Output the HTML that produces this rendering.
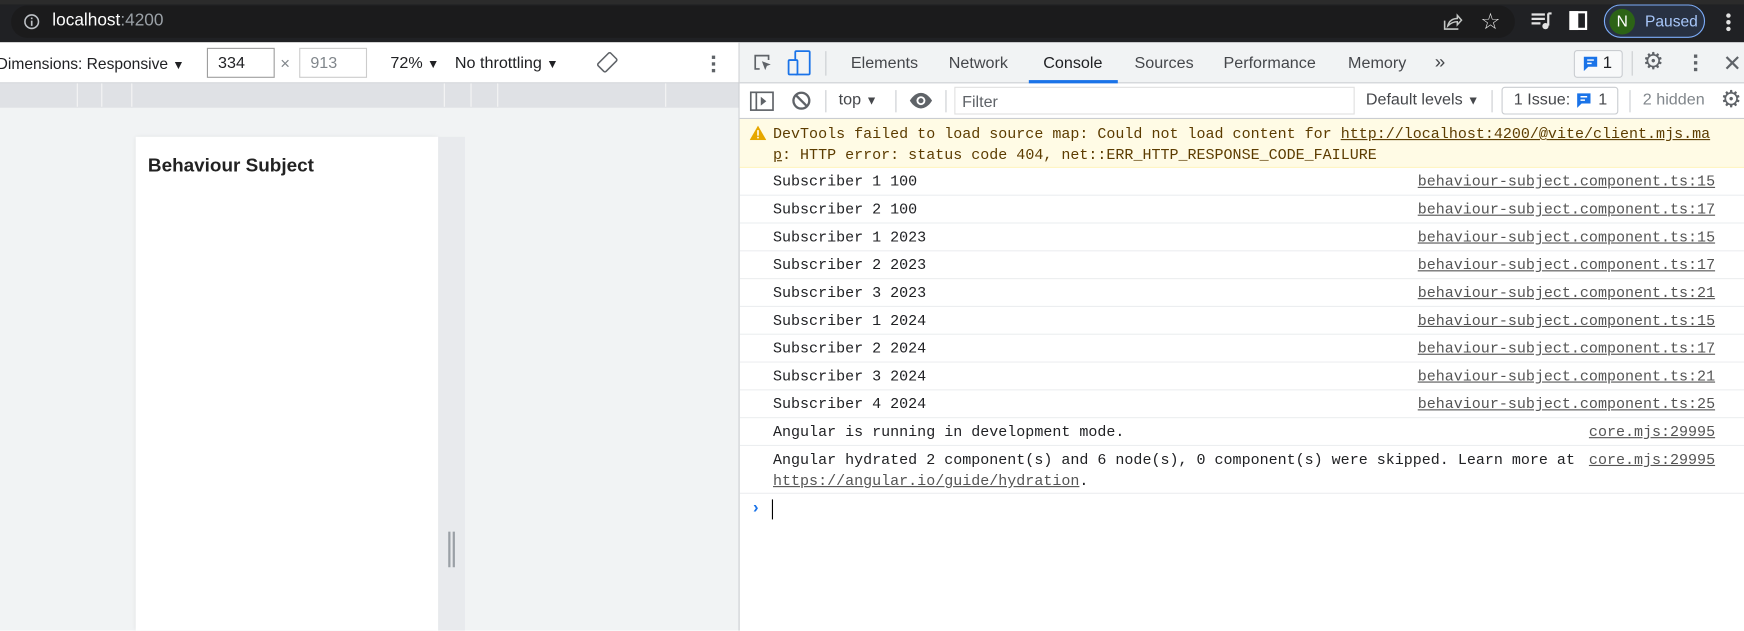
<!DOCTYPE html>
<html><head><meta charset="utf-8"><style>
*{box-sizing:border-box;margin:0;padding:0}
html,body{width:1744px;height:631px;overflow:hidden;background:#fff}
#w{position:absolute;left:0;top:0;width:1568px;height:567px;transform:scale(1.112245);transform-origin:0 0;font-family:"Liberation Sans",sans-serif;font-size:14px;color:#202124}
.a{position:absolute}
.mono{font-family:"Liberation Mono",monospace;font-size:13.5px}
.row{position:absolute;left:665px;right:0;height:25px;border-bottom:1px solid #eceef0}
.row .t{position:absolute;left:30px;top:6px;color:#202124;white-space:pre}
.row .l{position:absolute;right:26px;top:6px;color:#545454;text-decoration:underline}
.tab{position:absolute;top:49px;font-size:14.5px;color:#45474b}
</style></head><body><div id="w">
<!-- top bar -->
<div class="a" style="left:0;top:0;width:1568px;height:38px;background:#2b2b2b"></div>
<div class="a" style="left:0;top:4px;width:1568px;height:34px;background:#202124"></div>
<div class="a" style="left:10px;top:5px;width:1352px;height:29px;border-radius:15px;background:#1b1b1c"></div>
<svg class="a" style="left:21px;top:12px" width="15" height="15" viewBox="0 0 16 16"><circle cx="8" cy="8" r="6.5" fill="none" stroke="#bdc1c6" stroke-width="1.5"/><rect x="7.2" y="7" width="1.6" height="5" fill="#bdc1c6"/><rect x="7.2" y="4" width="1.6" height="1.6" fill="#bdc1c6"/></svg>
<div class="a" style="left:47px;top:10px;font-size:15.5px;color:#fff">localhost<span style="color:#9aa0a6">:4200</span></div>
<svg class="a" style="left:1296px;top:10px" width="19" height="19" viewBox="0 0 20 20"><path d="M3 9v8h13" fill="none" stroke="#c4c7c5" stroke-width="1.5"/><path d="M6 14c1-5 5-7 9-7V4l4 4.5-4 4.5V10c-3 0-6 1-9 4z" fill="none" stroke="#c4c7c5" stroke-width="1.4"/></svg>
<div class="a" style="left:1331px;top:7px;font-size:20px;color:#e3e3e3">☆</div>
<svg class="a" style="left:1376px;top:11px" width="20" height="16" viewBox="0 0 20 16"><path d="M1 2h12M1 6h12M1 10h8" stroke="#e3e3e3" stroke-width="2"/><path d="M16 1v11" stroke="#e3e3e3" stroke-width="2"/><path d="M16 1h3" stroke="#e3e3e3" stroke-width="2"/><circle cx="13.5" cy="12.5" r="2.8" fill="#e3e3e3"/></svg>
<div class="a" style="left:1411px;top:10px;width:16px;height:17px;border:2px solid #fff;border-left-width:3px;background:#202124"></div>
<div class="a" style="left:1411px;top:10px;width:8px;height:17px;background:#fff"></div>
<div class="a" style="left:1442px;top:4px;width:91px;height:30px;border:1.5px solid #7cacf8;border-radius:15px;background:#283142"></div>
<div class="a" style="left:1447px;top:8px;width:23px;height:23px;border-radius:50%;background:#2c6316;color:#fff;font-size:14px;text-align:center;line-height:23px">N</div>
<div class="a" style="left:1479px;top:11px;font-size:14px;color:#a8c7fa">Paused</div>
<div class="a" style="left:1552px;top:12px;width:4px;height:4px;border-radius:2px;background:#e3e3e3;box-shadow:0 6px 0 #e3e3e3,0 12px 0 #e3e3e3"></div>

<!-- left device pane -->
<div class="a" style="left:0;top:38px;width:665px;height:37px;background:#fff;border-bottom:1px solid #d0d3d7"></div>
<div class="a" style="left:-3px;top:49px;font-size:14px;color:#202124">Dimensions: Responsive <span style="font-size:11px">▼</span></div>
<div class="a" style="left:186px;top:43px;width:61px;height:27px;border:1px solid #9e9e9e;background:#fff;padding:5px 0 0 9px;font-size:14.5px">334</div>
<div class="a" style="left:252px;top:49px;font-size:15px;color:#80868b">×</div>
<div class="a" style="left:269px;top:43px;width:61px;height:27px;border:1px solid #ccc;background:#fff;padding:5px 0 0 9px;font-size:14.5px;color:#80868b">913</div>
<div class="a" style="left:351px;top:49px;font-size:14.5px">72% <span style="font-size:11px">▼</span></div>
<div class="a" style="left:409px;top:49px;font-size:14.5px">No throttling <span style="font-size:11px">▼</span></div>
<svg class="a" style="left:536px;top:46px" width="20" height="20" viewBox="0 0 20 20"><rect x="5" y="2" width="10" height="16" rx="1.5" transform="rotate(45 10 10)" fill="none" stroke="#5f6368" stroke-width="1.4"/></svg>
<div class="a" style="left:640px;top:50px;width:3px;height:3px;background:#5f6368;box-shadow:0 6px 0 #5f6368,0 12px 0 #5f6368"></div>
<div class="a" style="left:0;top:75px;width:665px;height:22px;background:#dfe1e5"></div>
<div class="a" style="left:69px;top:75px;width:1px;height:21px;background:#f5f5f5"></div>
<div class="a" style="left:91px;top:75px;width:1px;height:21px;background:#f5f5f5"></div>
<div class="a" style="left:118px;top:75px;width:1px;height:21px;background:#f5f5f5"></div>
<div class="a" style="left:399px;top:75px;width:1px;height:21px;background:#f5f5f5"></div>
<div class="a" style="left:423px;top:75px;width:1px;height:21px;background:#f5f5f5"></div>
<div class="a" style="left:447px;top:75px;width:1px;height:21px;background:#f5f5f5"></div>
<div class="a" style="left:598px;top:75px;width:1px;height:21px;background:#f5f5f5"></div>
<div class="a" style="left:0;top:97px;width:665px;height:470px;background:#f1f3f4"></div>
<div class="a" style="left:122px;top:123px;width:272px;height:444px;background:#fff;box-shadow:0 0 4px rgba(0,0,0,.08)"></div>
<div class="a" style="left:394px;top:123px;width:24px;height:444px;background:#e8eaed"></div>
<div class="a" style="left:403px;top:478px;width:2px;height:32px;background:#9aa0a6"></div>
<div class="a" style="left:407px;top:478px;width:2px;height:32px;background:#9aa0a6"></div>
<div class="a" style="left:133px;top:139px;font-size:17px;font-weight:bold;color:#222">Behaviour Subject</div>

<!-- devtools -->
<div class="a" style="left:664px;top:38px;width:1px;height:529px;background:#cacdd1"></div>
<div class="a" style="left:665px;top:38px;width:903px;height:37px;background:#f1f3f4;border-bottom:1px solid #cacdd1"></div>
<svg class="a" style="left:676px;top:47px" width="20" height="20" viewBox="0 0 20 20"><path d="M7 15H3V3h12v4" fill="none" stroke="#5f6368" stroke-width="1.5"/><path d="M9 8l8 3-3.5 1.2L12 16z" fill="#5f6368"/></svg>
<svg class="a" style="left:708px;top:45px" width="22" height="24" viewBox="0 0 22 24"><rect x="7" y="1" width="13" height="21" rx="1" fill="none" stroke="#1a73e8" stroke-width="1.6"/><rect x="1" y="9" width="8" height="13" rx="1" fill="#f1f3f4" stroke="#1a73e8" stroke-width="1.6"/></svg>
<div class="a" style="left:742px;top:46px;width:1px;height:22px;background:#cacdd1"></div>
<div class="tab" style="left:765px">Elements</div>
<div class="tab" style="left:853px">Network</div>
<div class="tab" style="left:938px;color:#202124">Console</div>
<div class="a" style="left:925px;top:72px;width:80px;height:3px;background:#1a73e8"></div>
<div class="tab" style="left:1020px">Sources</div>
<div class="tab" style="left:1100px">Performance</div>
<div class="tab" style="left:1212px">Memory</div>
<div class="tab" style="left:1290px;font-size:17px;top:46px">»</div>
<div class="a" style="left:1415px;top:45px;width:44px;height:25px;border:1px solid #cacdd1;border-radius:3px;background:#f8f9fa"></div>
<svg class="a" style="left:1423px;top:50px" width="14" height="15" viewBox="0 0 14 15"><path d="M1 1h12v9H5l-4 4z" fill="#1a73e8"/><path d="M4 4h6M4 7h4" stroke="#fff" stroke-width="1.3"/></svg>
<div class="a" style="left:1441px;top:48px;font-size:15px">1</div>
<div class="a" style="left:1467px;top:46px;width:1px;height:22px;background:#cacdd1"></div>
<div class="a" style="left:1477px;top:43px;font-size:21px;color:#5f6368">⚙</div>
<div class="a" style="left:1523px;top:49px;width:3px;height:3px;background:#5f6368;box-shadow:0 6px 0 #5f6368,0 12px 0 #5f6368"></div>
<div class="a" style="left:1549px;top:45px;font-size:20px;color:#5f6368">✕</div>

<div class="a" style="left:665px;top:75px;width:903px;height:32px;background:#fff;border-bottom:1px solid #cacdd1"></div>
<svg class="a" style="left:674px;top:81px" width="22" height="20" viewBox="0 0 22 20"><rect x="1" y="2" width="20" height="16" fill="none" stroke="#5f6368" stroke-width="1.5"/><path d="M6 2v16" stroke="#5f6368" stroke-width="1.5"/><path d="M10 6l5 4-5 4z" fill="#5f6368"/></svg>
<svg class="a" style="left:711px;top:81px" width="19" height="19" viewBox="0 0 20 20"><circle cx="10" cy="10" r="7.5" fill="none" stroke="#5f6368" stroke-width="2.2"/><path d="M5 5l10 10" stroke="#5f6368" stroke-width="2.2"/></svg>
<div class="a" style="left:742px;top:81px;width:1px;height:20px;background:#cacdd1"></div>
<div class="a" style="left:754px;top:82px;font-size:14.5px;color:#45474b">top <span style="font-size:11px">▼</span></div>
<div class="a" style="left:805px;top:81px;width:1px;height:20px;background:#cacdd1"></div>
<svg class="a" style="left:817px;top:82px" width="22" height="17" viewBox="0 0 22 16"><path d="M1 8c3-5 7-7 10-7s7 2 10 7c-3 5-7 7-10 7S4 13 1 8z" fill="#5f6368"/><circle cx="11" cy="8" r="4" fill="#fff"/><circle cx="11" cy="8" r="2.3" fill="#5f6368"/></svg>
<div class="a" style="left:850px;top:81px;width:1px;height:20px;background:#cacdd1"></div>
<div class="a" style="left:858px;top:78px;width:360px;height:25px;border:1px solid #e0e0e0;background:#fff;padding:5px 0 0 6px;font-size:14.5px;color:#5f6368">Filter</div>
<div class="a" style="left:1228px;top:82px;font-size:14.5px;color:#45474b">Default levels <span style="font-size:11px">▼</span></div>
<div class="a" style="left:1341px;top:81px;width:1px;height:20px;background:#cacdd1"></div>
<div class="a" style="left:1350px;top:78px;width:105px;height:25px;border:1px solid #cacdd1;border-radius:3px"></div>
<div class="a" style="left:1361px;top:82px;font-size:14.5px;color:#45474b">1 Issue:</div>
<svg class="a" style="left:1417px;top:83px" width="14" height="15" viewBox="0 0 14 15"><path d="M1 1h12v9H5l-4 4z" fill="#1a73e8"/><path d="M4 4h6M4 7h4" stroke="#fff" stroke-width="1.3"/></svg>
<div class="a" style="left:1437px;top:82px;font-size:14.5px;color:#45474b">1</div>
<div class="a" style="left:1465px;top:81px;width:1px;height:20px;background:#cacdd1"></div>
<div class="a" style="left:1477px;top:82px;font-size:14.5px;color:#80868b">2 hidden</div>
<div class="a" style="left:1547px;top:77px;font-size:21px;color:#5f6368">⚙</div>

<!-- warning -->
<div class="a" style="left:665px;top:107px;width:903px;height:44px;background:#fffbe5;border-bottom:1px solid #fff5c2"></div>
<svg class="a" style="left:674px;top:113px" width="15" height="13" viewBox="0 0 15 13"><path d="M7.5 0L15 13H0z" fill="#e6a700"/><rect x="6.8" y="4" width="1.4" height="5" fill="#fff"/><rect x="6.8" y="10" width="1.4" height="1.4" fill="#fff"/></svg>
<div class="a mono" style="left:695px;top:112px;color:#5c3c00;white-space:pre;line-height:19px">DevTools failed to load source map: Could not load content for <u>http://localhost:4200/@vite/client.mjs.ma</u>
<u>p</u>: HTTP error: status code 404, net::ERR_HTTP_RESPONSE_CODE_FAILURE</div>

<div class="row mono" style="top:151px"><span class="t">Subscriber 1 100</span><span class="l">behaviour-subject.component.ts:15</span></div>
<div class="row mono" style="top:176px"><span class="t">Subscriber 2 100</span><span class="l">behaviour-subject.component.ts:17</span></div>
<div class="row mono" style="top:201px"><span class="t">Subscriber 1 2023</span><span class="l">behaviour-subject.component.ts:15</span></div>
<div class="row mono" style="top:226px"><span class="t">Subscriber 2 2023</span><span class="l">behaviour-subject.component.ts:17</span></div>
<div class="row mono" style="top:251px"><span class="t">Subscriber 3 2023</span><span class="l">behaviour-subject.component.ts:21</span></div>
<div class="row mono" style="top:276px"><span class="t">Subscriber 1 2024</span><span class="l">behaviour-subject.component.ts:15</span></div>
<div class="row mono" style="top:301px"><span class="t">Subscriber 2 2024</span><span class="l">behaviour-subject.component.ts:17</span></div>
<div class="row mono" style="top:326px"><span class="t">Subscriber 3 2024</span><span class="l">behaviour-subject.component.ts:21</span></div>
<div class="row mono" style="top:351px"><span class="t">Subscriber 4 2024</span><span class="l">behaviour-subject.component.ts:25</span></div>
<div class="row mono" style="top:376px"><span class="t">Angular is running in development mode.</span><span class="l">core.mjs:29995</span></div>
<div class="row mono" style="top:401px;height:43px"><span class="t" style="line-height:19px;top:4px">Angular hydrated 2 component(s) and 6 node(s), 0 component(s) were skipped. Learn more at
<u style="color:#545454">https://angular.io/guide/hydration</u>.</span><span class="l" style="top:6px">core.mjs:29995</span></div>
<div class="a" style="left:677px;top:448px;color:#1a73e8;font-size:15px;font-weight:bold">›</div>
<div class="a" style="left:694px;top:449px;width:1px;height:18px;background:#000"></div>
</div></body></html>
